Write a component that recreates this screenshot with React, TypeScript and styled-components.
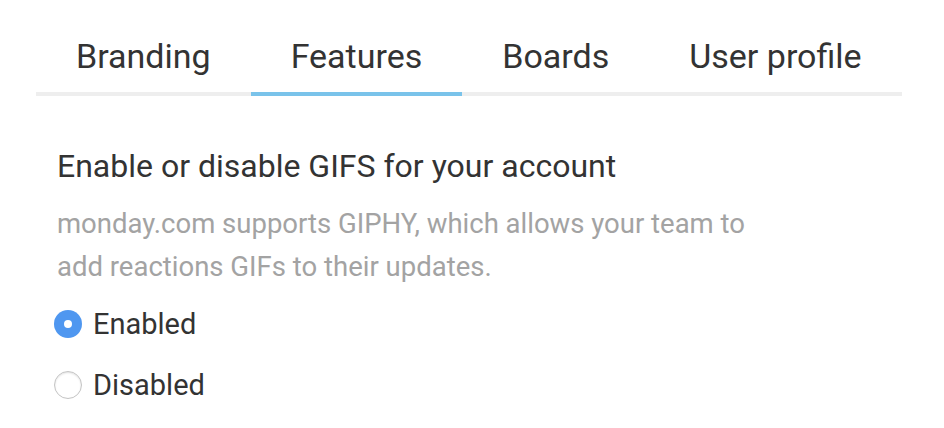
import { useState } from 'react';
import styled, { createGlobalStyle } from 'styled-components';

const GlobalStyle = createGlobalStyle`
   body {
      margin: 0;
      background: #ffffff;
      font-family: Roboto, 'Noto Sans', sans-serif;
      color: #333333;
   }
`;

const tabs = ['Branding', 'Features', 'Boards', 'User profile'];

const App = () => {
   const [active, setActive] = useState(1);
   const [enabled, setEnabled] = useState(true);

   return (
      <Page>
         <GlobalStyle />
         <TabBar>
            {tabs.map((tab, i) => (
               <Tab key={tab} active={i === active} onClick={() => setActive(i)}>
                  {tab}
               </Tab>
            ))}
         </TabBar>
         <Section>
            <Title>Enable or disable GIFS for your account</Title>
            <Description>
               monday.com supports GIPHY, which allows your team to add reactions GIFs to their updates.
            </Description>
            <Options>
               <Option onClick={() => setEnabled(true)}>
                  <Radio checked={enabled} />
                  Enabled
               </Option>
               <Option onClick={() => setEnabled(false)}>
                  <Radio checked={!enabled} />
                  Disabled
               </Option>
            </Options>
         </Section>
      </Page>
   );
};

const Page = styled.div`
   width: 944px;
   height: 428px;
   padding: 30px 42px 0 36px;
   box-sizing: border-box;
`;

const TabBar = styled.div`
   display: flex;
   border-bottom: 4px solid #eeeeee;
`;

const Tab = styled.div<{ active: boolean }>`
   padding: 6px 40px 16px;
   margin-bottom: -4px;
   font-size: 34px;
   line-height: 40px;
   color: #333333;
   white-space: nowrap;
   cursor: pointer;
   border-bottom: 4px solid ${(p) => (p.active ? '#7ac3ea' : 'transparent')};
`;

const Section = styled.div`
   padding: 50px 0 0 21px;
`;

const Title = styled.h2`
   margin: 0;
   font-size: 32px;
   font-weight: 400;
   line-height: 40px;
   color: #333333;
`;

const Description = styled.p`
   margin: 16px 0 0;
   width: 730px;
   font-size: 27.5px;
   line-height: 43px;
   color: #a3a3a3;
`;

const Options = styled.div`
   display: flex;
   flex-direction: column;
   gap: 25px;
   margin-top: 18px;
`;

const Option = styled.label`
   display: flex;
   align-items: center;
   gap: 11px;
   font-size: 29px;
   line-height: 36px;
   color: #333333;
   cursor: pointer;
`;

const Radio = styled.span<{ checked: boolean }>`
   box-sizing: border-box;
   width: 28px;
   height: 28px;
   margin-left: -3px;
   border-radius: 50%;
   background: ${(p) => (p.checked ? '#4f97f0' : '#ffffff')};
   border: ${(p) => (p.checked ? 'none' : '1.5px solid #c4c4c4')};
   box-shadow: ${(p) => (p.checked ? 'none' : 'inset 0 1px 2px rgba(0, 0, 0, 0.12)')};
   display: flex;
   align-items: center;
   justify-content: center;

   &::after {
      content: '';
      width: 8px;
      height: 8px;
      border-radius: 50%;
      background: #ffffff;
      display: ${(p) => (p.checked ? 'block' : 'none')};
   }
`;

export default App;
